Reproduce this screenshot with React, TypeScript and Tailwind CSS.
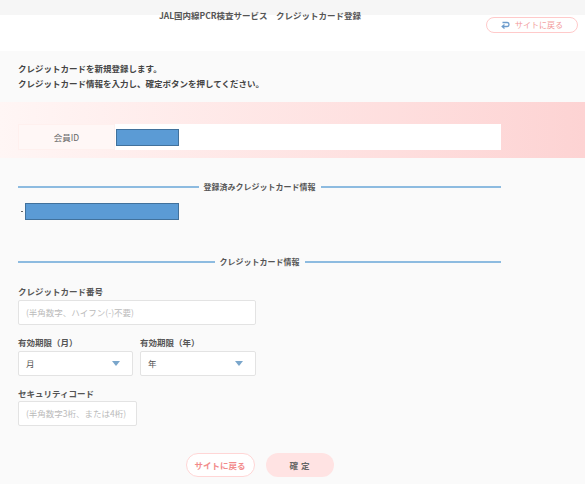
import React from 'react';

const font = { fontFamily: '"Noto Sans CJK JP", "Noto Sans", sans-serif' };

const Divider: React.FC<{ label: string }> = ({ label }) => (
  <div className="flex items-center h-[12px]">
    <div className="flex-1 h-[1.5px] bg-[#8dbbe0]" />
    <span className="px-[5px] text-[8px] font-bold text-[#555] leading-[12px]">{label}</span>
    <div className="flex-1 h-[1.5px] bg-[#8dbbe0]" />
  </div>
);

const Caret = () => (
  <svg width="8" height="5" viewBox="0 0 8 5" className="shrink-0">
    <path d="M0 0 H8 L4 5 Z" fill="#7aa6cb" />
  </svg>
);

const Select: React.FC<{ value: string; width: string }> = ({ value, width }) => (
  <div className={`${width} h-[25px] bg-white border border-[#e3e3e3] rounded-[2px] flex items-center justify-between pl-[7px] pr-[12px]`}>
    <span className="text-[8.5px] text-[#555]">{value}</span>
    <Caret />
  </div>
);

const App: React.FC = () => {
  return (
    <div style={font} className="w-[585px] h-[484px] bg-[#fafafa] overflow-hidden">
      {/* Header */}
      <div className="h-[15px] bg-[#f6f6f6] w-full">
        <div className="w-[520px] text-center">
          <span className="text-[8.5px] font-bold text-[#555] leading-[13px]">JAL国内線PCR検査サービス　クレジットカード登録</span>
        </div>
      </div>
      <div className="h-[36px] bg-white flex justify-end items-start pt-[2px] pr-[7px]">
        <button className="w-[92px] h-[16px] rounded-full border border-[#ffcaca] bg-white flex items-center justify-center gap-[5px]">
          <svg width="9" height="8" viewBox="0 0 9 8">
            <path d="M1.5 1.5 H6 A2 2 0 0 1 6 5.5 H2" stroke="#6d9ccc" strokeWidth="1.3" fill="none" />
            <path d="M3.5 3.6 L1.2 5.5 L3.5 7.4" stroke="#6d9ccc" strokeWidth="1.3" fill="none" />
          </svg>
          <span className="text-[8px] text-[#f29a9a] leading-none">サイトに戻る</span>
        </button>
      </div>

      {/* Intro */}
      <div className="pt-[10px] pl-[18px] text-[8.5px] font-bold text-[#444] leading-[15px]">
        <p>クレジットカードを新規登録します。</p>
        <p>クレジットカード情報を入力し、確定ボタンを押してください。</p>
      </div>

      {/* Member ID band */}
      <div className="mt-[11px] h-[56px] bg-gradient-to-r from-[#fff6f5] to-[#fdd3d3] pt-[22px] pl-[18px]">
        <div className="w-[483px] h-[26px] bg-white flex items-center">
          <div className="w-[97px] h-full bg-[#fff7f6] flex items-center justify-center border border-[#fff0ee]">
            <span className="text-[8.5px] text-[#666]">会員ID</span>
          </div>
          <div className="ml-[1px] w-[63px] h-[17px] bg-[#5b9bd5] border border-[#41719c]" />
        </div>
      </div>

      <div className="w-[483px] ml-[18px]">
        {/* Registered card */}
        <div className="mt-[23px]">
          <Divider label="登録済みクレジットカード情報" />
        </div>
        <div className="mt-[10px] flex items-center">
          <span className="w-[7px] pl-[3px] flex items-center">
            <span className="w-[1.5px] h-[1.5px] bg-[#666]" />
          </span>
          <div className="w-[154px] h-[17px] bg-[#5b9bd5] border border-[#41719c]" />
        </div>

        {/* Card info */}
        <div className="mt-[36px]">
          <Divider label="クレジットカード情報" />
        </div>

        <p className="mt-[17px] text-[8.5px] font-bold text-[#555] leading-[12px]">クレジットカード番号</p>
        <div className="mt-[3px] w-[238px] h-[25px] bg-white border border-[#e3e3e3] rounded-[2px] flex items-center pl-[7px]">
          <span className="text-[8.5px] text-[#bbb]">(半角数字、ハイフン(-)不要)</span>
        </div>

        <div className="mt-[11px] flex gap-[7px]">
          <div>
            <p className="text-[8.5px] font-bold text-[#555] leading-[12px]">有効期限（月）</p>
            <div className="mt-[3px]">
              <Select value="月" width="w-[115px]" />
            </div>
          </div>
          <div>
            <p className="text-[8.5px] font-bold text-[#555] leading-[12px]">有効期限（年）</p>
            <div className="mt-[3px]">
              <Select value="年" width="w-[116px]" />
            </div>
          </div>
        </div>

        <p className="mt-[11px] text-[8.5px] font-bold text-[#555] leading-[12px]">セキュリティコード</p>
        <div className="mt-[2px] w-[119px] h-[25px] bg-white border border-[#e3e3e3] rounded-[2px] flex items-center pl-[7px]">
          <span className="text-[8.5px] text-[#bbb]">(半角数字3桁、または4桁)</span>
        </div>

        {/* Buttons */}
        <div className="mt-[27px] flex justify-center gap-[11px]">
          <button className="w-[69px] h-[24px] rounded-full bg-white border-[1.5px] border-[#ffd6d6] text-[8.5px] font-bold text-[#f28b8b]">
            サイトに戻る
          </button>
          <button className="w-[68px] h-[24px] rounded-full bg-[#ffe3e3] text-[8.5px] font-bold text-[#666] tracking-[3px] pl-[3px]">
            確定
          </button>
        </div>
      </div>
    </div>
  );
};

export default App;
